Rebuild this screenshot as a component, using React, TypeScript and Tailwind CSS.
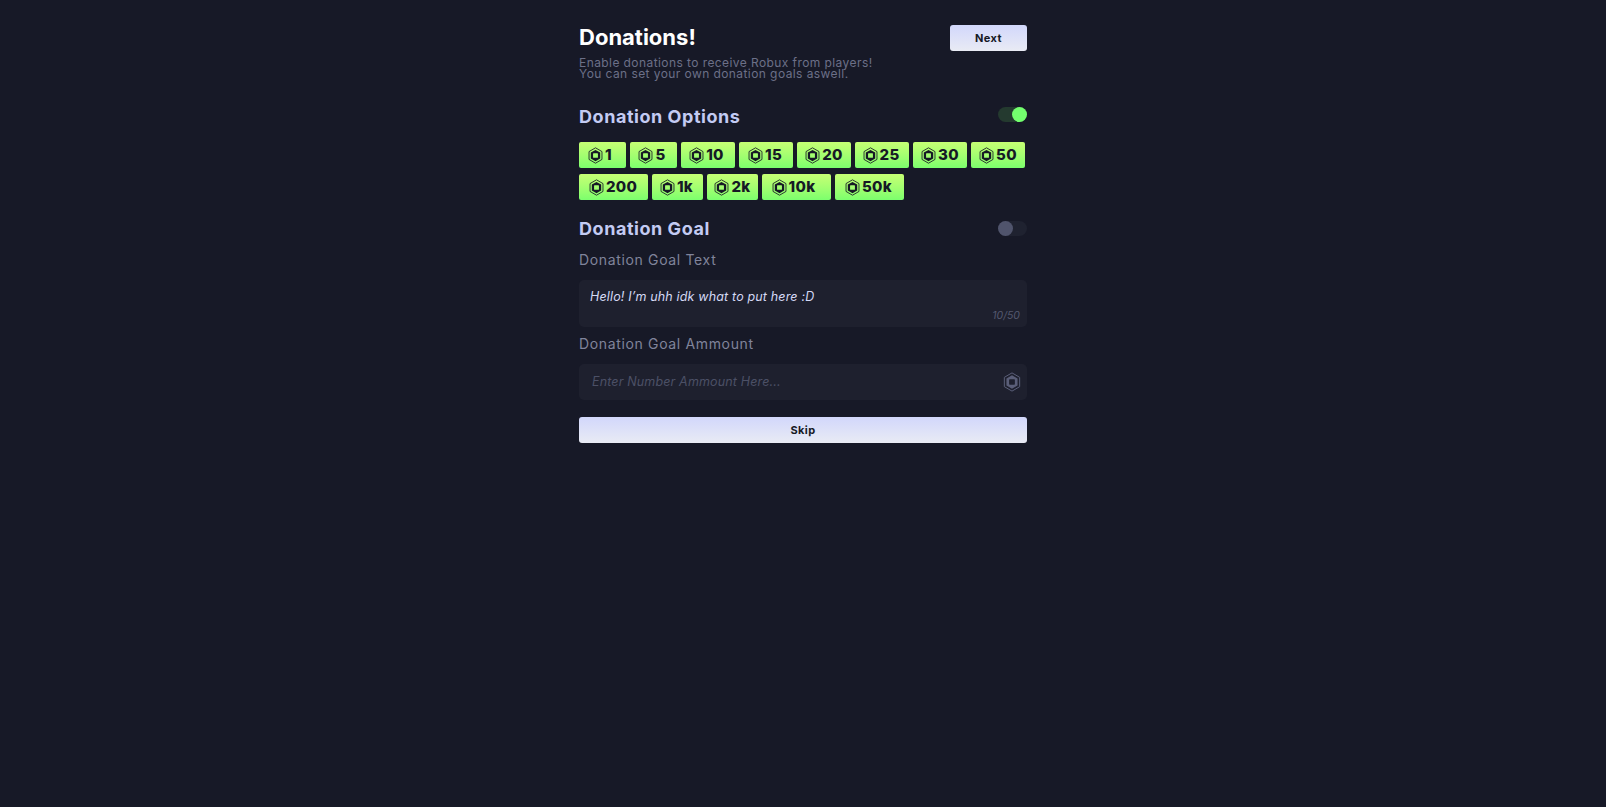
const amountsTop = [
  { label: "1", width: "w-[47px] pr-[5px]" },
  { label: "5", width: "w-[47px] pr-[3px]" },
  { label: "10", width: "w-[54px] pr-[3px]" },
  { label: "15", width: "w-[54px] pr-[2px]" },
  { label: "20", width: "w-[54px]" },
  { label: "25", width: "w-[54px] pr-[2px]" },
  { label: "30", width: "w-[54px]" },
  { label: "50", width: "w-[54px]" },
];

const amountsBottom = [
  { label: "200", width: "w-[69px] pr-[1px]" },
  { label: "1k", width: "w-[51px] pr-[2px]" },
  { label: "2k", width: "w-[51px]" },
  { label: "10k", width: "w-[69px] pr-[6px]" },
  { label: "50k", width: "w-[69px] pr-[2px]" },
];

// Robux hexagon: thin outer outline, thick inner ring, hole in the middle
function RobuxIcon({ className }: { className?: string }) {
  return (
    <svg viewBox="0 0 16 18" fill="none" className={className}>
      <path
        d="M8 .8 14.9 4.8V13.2L8 17.2 1.1 13.2V4.8Z"
        stroke="currentColor"
        strokeWidth="0.9"
        strokeLinejoin="round"
      />
      <path
        fillRule="evenodd"
        clipRule="evenodd"
        d="M8 3 13 5.9V12.1L8 15 3 12.1V5.9ZM6 6.6H10Q10.6 6.6 10.6 7.2V10.8Q10.6 11.4 10 11.4H6Q5.4 11.4 5.4 10.8V7.2Q5.4 6.6 6 6.6Z"
        fill="currentColor"
      />
    </svg>
  );
}

function Toggle({ on }: { on: boolean }) {
  return (
    <div
      className={`flex h-[15px] w-[29px] rounded-full ${
        on ? "mb-[4px] justify-end bg-[#243a2f]" : "mb-[-1px] justify-start bg-[#1f2230]"
      }`}
    >
      <div className={`h-[15px] w-[15px] rounded-full ${on ? "bg-[#73ff6e]" : "bg-[#50546c]"}`} />
    </div>
  );
}

function Chip({ label, width }: { label: string; width: string }) {
  return (
    <button
      className={`flex h-[26px] items-center justify-center gap-[2px] rounded-[2px] bg-gradient-to-b from-[#c6ff74] to-[#7bff6d] text-[15px] font-extrabold tracking-[0.3px] text-[#161925] ${width}`}
    >
      <RobuxIcon className="h-[17px] w-[15px] shrink-0" />
      {label}
    </button>
  );
}

function LightButton({ label, className }: { label: string; className: string }) {
  return (
    <button
      className={`h-[26px] rounded-[3px] bg-gradient-to-b from-[#d2d7fb] to-[#e9ebf4] text-[11px] font-bold tracking-[0.4px] text-[#161925] ${className}`}
    >
      {label}
    </button>
  );
}

export default function App() {
  return (
    <div className="min-h-screen bg-[#171927] font-['Inter',sans-serif]">
      <div className="mx-auto flex w-[448px] flex-col pt-[25px]">
        <div className="flex items-start justify-between">
          <div>
            <h1 className="mt-[1px] text-[22px] leading-[22px] font-bold text-white">Donations!</h1>
            <p className="mt-[9px] text-[12px] leading-[11px] tracking-[0.42px] text-[#6c7088]">
              Enable donations to receive Robux from players!
              <br />
              You can set your own donation goals aswell.
            </p>
          </div>
          <LightButton label="Next" className="w-[77px]" />
        </div>

        <div className="mt-[25px] flex h-[24px] items-center justify-between">
          <h2 className="text-[18px] font-bold tracking-[0.55px] text-[#c3cbf3]">Donation Options</h2>
          <Toggle on />
        </div>

        <div className="mt-[14px] flex flex-col gap-[6px]">
          <div className="flex gap-[4px]">
            {amountsTop.map((a) => (
              <Chip key={a.label} {...a} />
            ))}
          </div>
          <div className="flex gap-[4px]">
            {amountsBottom.map((a) => (
              <Chip key={a.label} {...a} />
            ))}
          </div>
        </div>

        <div className="mt-[16px] flex h-[24px] items-center justify-between">
          <h2 className="text-[18px] font-bold tracking-[0.55px] text-[#c3cbf3]">Donation Goal</h2>
          <Toggle on={false} />
        </div>

        <div className="mt-[10px] text-[14px] leading-[20px] tracking-[0.65px] text-[#80849b]">
          Donation Goal Text
        </div>
        <div className="relative mt-[10px] h-[47px] rounded-[5px] bg-[#1e202e] px-[11px] pt-[9px] text-[12.5px] leading-[16px] tracking-[0.16px] text-[#d4d9f5] italic">
          Hello! I’m uhh idk what to put here :D
          <span className="absolute right-[7px] bottom-[4px] text-[10.5px] leading-[14px] tracking-normal text-[#54586e]">
            10/50
          </span>
        </div>

        <div className="mt-[7px] text-[14px] leading-[20px] tracking-[0.65px] text-[#80849b]">
          Donation Goal Ammount
        </div>
        <div className="mt-[10px] flex h-[36px] items-center justify-between rounded-[5px] bg-[#1e202e] pr-[6px] pl-[13px] text-[12.5px] tracking-[0.15px] text-[#4c5066] italic">
          Enter Number Ammount Here...
          <RobuxIcon className="h-[20px] w-[18px] text-[#5a5e78]" />
        </div>

        <LightButton label="Skip" className="mt-[17px] w-full" />
      </div>
    </div>
  );
}
